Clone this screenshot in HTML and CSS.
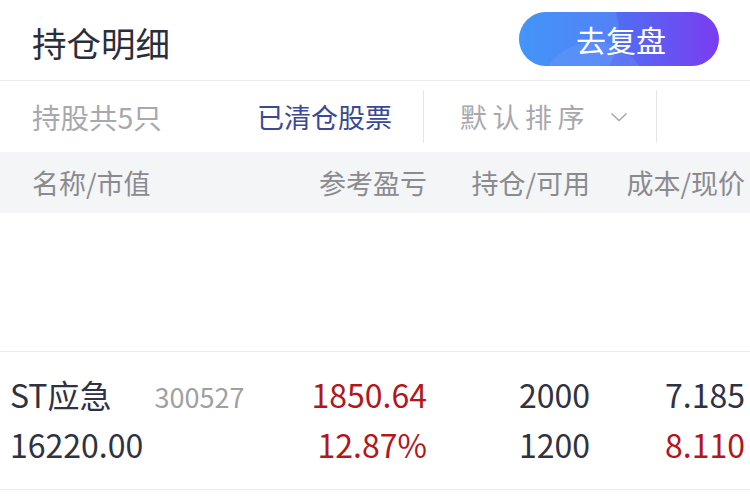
FILE: index.html
```html
<!DOCTYPE html>
<html lang="zh-CN">
<head>
  <meta charset="UTF-8">
  <title>持仓明细</title>
  <link rel="stylesheet" href="styles.css">
</head>
<body>

  <div class="topbar">
    <h2 class="title">持仓明细</h2>
    <button class="review"><span>去复盘</span></button>
  </div>

  <div class="tabs">
    <div class="tab tab-count">持股共5只</div>
    <div class="tab tab-cleared">已清仓股票</div>
    <div class="tab tab-sort">默认排序
      <svg class="chev" width="18" height="10" viewBox="0 0 18 10"><path d="M1.5 1.5 L9 8.5 L16.5 1.5" fill="none" stroke="#a6a6ac" stroke-width="1.4"/></svg>
    </div>
  </div>

  <div class="thead">
    <div class="c1">名称/市值</div>
    <div class="c2">参考盈亏</div>
    <div class="c3">持仓/可用</div>
    <div class="c4">成本/现价</div>
  </div>

  <div class="empty"></div>

  <div class="stock">
    <div class="line">
      <div class="c1">ST应急<span class="code">300527</span></div>
      <div class="c2 up">1850.64</div>
      <div class="c3">2000</div>
      <div class="c4">7.185</div>
    </div>
    <div class="line">
      <div class="c1">16220.00</div>
      <div class="c2 up">12.87%</div>
      <div class="c3">1200</div>
      <div class="c4 up">8.110</div>
    </div>
  </div>

</body>
</html>
```

FILE: styles.css
```css
body { margin: 0; background: #fff; font-family: "Noto Sans CJK SC", "Noto Sans", sans-serif; width: 750px; overflow: hidden; }

.topbar { display: flex; align-items: center; justify-content: space-between; height: 80px; padding: 0 31px 0 32px; border-bottom: 1px solid #ececee; }
.title { margin: 4px 0 0; font-size: 34.5px; font-weight: 400; color: #2a2e3a; }
.review { position: relative; overflow: hidden; width: 200px; height: 54px; margin-top: -2px; border: none; border-radius: 27px; color: #fff; font-family: inherit; font-size: 30px; padding: 0 0 0 4px; background: linear-gradient(90deg, #3a88f6 0%, #5568f3 55%, #7a3cf1 100%); }
.review span { position: relative; z-index: 1; }
.review::before { content: ""; position: absolute; left: -20px; top: -40px; width: 120px; height: 120px; border-radius: 50%; background: rgba(90, 180, 255, 0.3); }
.review::after { content: ""; position: absolute; left: 20px; top: 30px; width: 110px; height: 110px; border-radius: 50%; background: rgba(140, 170, 255, 0.2); }

.tabs { display: flex; align-items: center; height: 70px; }
.tab { font-size: 27px; color: #a8a8ae; white-space: nowrap; box-sizing: border-box; }
.tab-count { width: 257px; padding-left: 32px; font-size: 28.5px; }
.tab-cleared { width: 167px; color: #3a4896; height: 53px; line-height: 53px; border-right: 1px solid #e6e6ea; }
.tab-sort { width: 233px; padding-left: 36px; letter-spacing: 5.5px; height: 53px; line-height: 53px; border-right: 1px solid #e6e6ea; }
.chev { margin-left: 8px; vertical-align: 6px; }

.thead, .line { display: grid; grid-template-columns: 1fr 130px 163px 155px; padding-right: 5px; align-items: center; }
.thead { height: 61px; margin-top: 1px; background: #f4f5f7; padding-left: 32px; font-size: 27px; color: #8b8b8f; }
.c2, .c3, .c4 { text-align: right; white-space: nowrap; }

.empty { height: 138px; border-bottom: 1px solid #ececee; }

.stock { padding: 17px 0 20px 10px; border-bottom: 1px solid #ececee; }
.line { height: 50px; font-size: 32px; color: #2e3242; }
.code { font-size: 27px; color: #a0a0a4; margin-left: 43px; }
.up { color: #b3161c; }
```
